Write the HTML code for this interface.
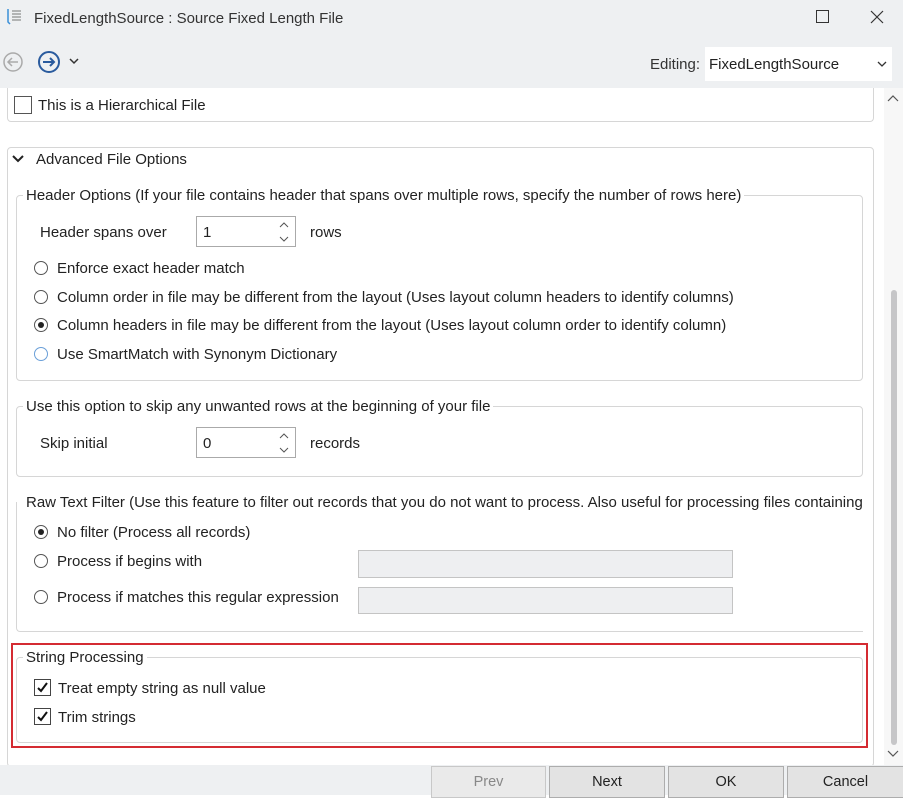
<!DOCTYPE html>
<html><head><meta charset="utf-8"><style>
*{box-sizing:border-box;margin:0;padding:0}
body{width:903px;height:795px;overflow:hidden;background:#fff;font-family:"Liberation Sans",sans-serif;font-size:15px;color:#222;position:relative}
.a{position:absolute;white-space:nowrap;line-height:19px}
.box{position:absolute;border:1px solid #d6d6d6;border-radius:4px}
.lg{position:absolute;background:#fff;padding:0 3px;line-height:19px;white-space:nowrap}
.rd{position:absolute;width:14px;height:14px;border:1px solid #555;border-radius:50%;background:#fff}
.cb{position:absolute;width:17px;height:17px;border:1px solid #444;background:#fff}
.spin{position:absolute;width:100px;height:31px;border:1px solid #aaa;background:#fff;padding:7px 0 0 6px;line-height:18px}
.tb{position:absolute;left:358px;width:375px;background:#eeeff1;border:1px solid #c4c4c4}
.btn{position:absolute;top:766px;height:32px;background:#e3e3e3;border:1px solid #adadad;text-align:center;line-height:30px;color:#222;font-size:14.5px}
</style></head><body>
<div style="position:absolute;left:0;top:0;width:903px;height:88px;background:#eef0f2"></div>
<svg class="a" style="left:5px;top:7px" width="18" height="20" viewBox="0 0 18 20"><path d="M3 2v13l2 2" stroke="#3a8fd8" stroke-width="1.5" fill="none"/><path d="M7 4h9M7 7h9M7 10h9M7 13h9" stroke="#777" stroke-width="1"/></svg>
<div class="a" style="left:34px;top:9px;color:#333">FixedLengthSource : Source Fixed Length File</div>
<div class="a" style="left:816px;top:10px;width:13px;height:13px;border:1px solid #333"></div>
<svg class="a" style="left:870px;top:10px" width="14" height="14"><path d="M1 1L13 13M13 1L1 13" stroke="#333" stroke-width="1.2"/></svg>
<svg class="a" style="left:2px;top:51px" width="22" height="22"><circle cx="11" cy="11" r="9" fill="none" stroke="#aaa" stroke-width="1.5"/><path d="M16 11H6M10 7l-4 4 4 4" stroke="#aaa" stroke-width="1.5" fill="none"/></svg>
<svg class="a" style="left:37px;top:50px" width="24" height="24"><circle cx="12" cy="12" r="10" fill="none" stroke="#2a5b9e" stroke-width="2"/><path d="M6 12h11M13 8l4 4-4 4" stroke="#2a5b9e" stroke-width="2" fill="none"/></svg>
<svg class="a" style="left:69px;top:57px" width="10" height="8"><path d="M1 2l4 4 4-4" stroke="#333" stroke-width="1.5" fill="none"/></svg>
<div class="a" style="left:650px;top:55px;color:#333">Editing:</div>
<div style="position:absolute;left:705px;top:47px;width:187px;height:34px;background:#fff"></div>
<div class="a" style="left:709px;top:55px">FixedLengthSource</div>
<svg class="a" style="left:877px;top:61px" width="10" height="7"><path d="M1 1l4 4 4-4" stroke="#333" stroke-width="1.3" fill="none"/></svg>

<div class="box" style="left:7px;top:88px;width:867px;height:34px;border-top:none;border-radius:0 0 4px 4px"></div>
<div class="cb" style="left:14px;top:96px;width:18px;height:18px;border-color:#555"></div>
<div class="a" style="left:38px;top:96px">This is a Hierarchical File</div>

<div class="box" style="left:7px;top:147px;width:867px;height:620px"></div>
<svg class="a" style="left:12px;top:154px" width="12" height="10"><path d="M1 2l5 5 5-5" stroke="#222" stroke-width="2" fill="none"/></svg>
<div class="a" style="left:36px;top:150px">Advanced File Options</div>

<div class="box" style="left:16px;top:195px;width:847px;height:186px"></div>
<div class="lg" style="left:23px;top:186px">Header Options (If your file contains header that spans over multiple rows, specify the number of rows here)</div>
<div class="a" style="left:40px;top:223px">Header spans over</div>
<div class="spin" style="left:196px;top:216px">1</div>
<svg class="a" style="left:278px;top:220px" width="12" height="24"><path d="M2 7l4-4 4 4M2 17l4 4 4-4" stroke="#555" fill="none"/></svg>
<div class="a" style="left:310px;top:223px">rows</div>
<div class="rd" style="left:34px;top:261px"></div><div class="a" style="left:57px;top:259px">Enforce exact header match</div>
<div class="rd" style="left:34px;top:290px"></div><div class="a" style="left:57px;top:288px">Column order in file may be different from the layout (Uses layout column headers to identify columns)</div>
<div class="rd" style="left:34px;top:318px"></div><div style="position:absolute;left:38px;top:322px;width:6px;height:6px;border-radius:50%;background:#222"></div><div class="a" style="left:57px;top:316px">Column headers in file may be different from the layout (Uses layout column order to identify column)</div>
<div class="rd" style="left:34px;top:347px;border-color:#6a9fd8"></div><div class="a" style="left:57px;top:345px">Use SmartMatch with Synonym Dictionary</div>

<div class="box" style="left:16px;top:406px;width:847px;height:71px"></div>
<div class="lg" style="left:23px;top:397px">Use this option to skip any unwanted rows at the beginning of your file</div>
<div class="a" style="left:40px;top:434px">Skip initial</div>
<div class="spin" style="left:196px;top:427px">0</div>
<svg class="a" style="left:278px;top:431px" width="12" height="24"><path d="M2 7l4-4 4 4M2 17l4 4 4-4" stroke="#555" fill="none"/></svg>
<div class="a" style="left:310px;top:434px">records</div>

<div class="box" style="left:16px;top:502px;width:847px;height:130px;border-top:none;border-right:none;border-radius:0 0 0 4px"></div>
<div class="lg" style="left:23px;top:493px">Raw Text Filter (Use this feature to filter out records that you do not want to process. Also useful for processing files containing</div>
<div class="rd" style="left:34px;top:525px"></div><div style="position:absolute;left:38px;top:529px;width:6px;height:6px;border-radius:50%;background:#222"></div><div class="a" style="left:57px;top:523px">No filter (Process all records)</div>
<div class="rd" style="left:34px;top:554px"></div><div class="a" style="left:57px;top:552px">Process if begins with</div>
<div class="tb" style="top:550px;height:28px"></div>
<div class="rd" style="left:34px;top:590px"></div><div class="a" style="left:57px;top:588px">Process if matches this regular expression</div>
<div class="tb" style="top:587px;height:27px"></div>

<div style="position:absolute;left:11px;top:643px;width:857px;height:105px;border:2px solid #d42b32"></div>
<div class="box" style="left:16px;top:657px;width:847px;height:86px"></div>
<div class="lg" style="left:23px;top:648px">String Processing</div>
<div class="cb" style="left:34px;top:679px"></div>
<svg class="a" style="left:35px;top:680px" width="15" height="15"><path d="M3 8l3 3 6-8" stroke="#111" stroke-width="2" fill="none"/></svg>
<div class="a" style="left:58px;top:679px">Treat empty string as null value</div>
<div class="cb" style="left:34px;top:708px"></div>
<svg class="a" style="left:35px;top:709px" width="15" height="15"><path d="M3 8l3 3 6-8" stroke="#111" stroke-width="2" fill="none"/></svg>
<div class="a" style="left:58px;top:708px">Trim strings</div>

<div style="position:absolute;left:884px;top:88px;width:19px;height:677px;background:#f7f7f7"></div>
<svg class="a" style="left:887px;top:95px" width="12" height="8"><path d="M1 6l5-5 5 5" stroke="#555" stroke-width="1.2" fill="none"/></svg>
<div style="position:absolute;left:891px;top:290px;width:6px;height:455px;border-radius:3px;background:#c6c6c8"></div>
<svg class="a" style="left:887px;top:750px" width="12" height="8"><path d="M1 1l5 5 5-5" stroke="#555" stroke-width="1.2" fill="none"/></svg>

<div style="position:absolute;left:0;top:765px;width:903px;height:30px;background:#eef0f2"></div>
<div class="btn" style="left:431px;width:115px;background:#eaeaea;color:#888;border-color:#c8c8c8">Prev</div>
<div class="btn" style="left:549px;width:116px">Next</div>
<div class="btn" style="left:668px;width:116px">OK</div>
<div class="btn" style="left:787px;width:117px">Cancel</div>
</body></html>
